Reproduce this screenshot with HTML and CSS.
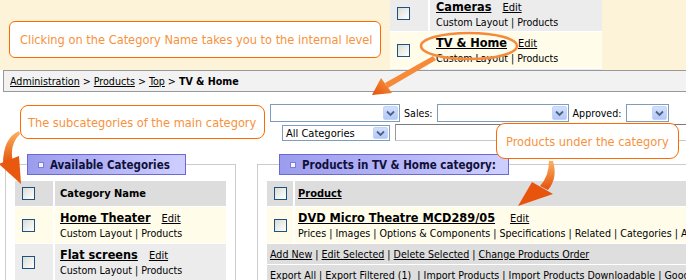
FILE: index.html
```html
<!DOCTYPE html>
<html>
<head>
<meta charset="utf-8">
<link rel="stylesheet" href="styles.css">
</head>
<body>
<div class="top">
  <div class="callout c1">Clicking on the Category Name takes you to the internal level</div>
  <div class="inset">
    <div class="row r-first">
      <div class="cbc gray"><span class="cb"></span></div>
      <div class="cell gray in-cell"><div class="nm"><a class="name">Cameras</a><a class="edit">Edit</a></div><div class="sub"><a>Custom Layout</a> | <a>Products</a></div></div>
    </div>
    <div class="row r-data">
      <div class="cbc cream"><span class="cb"></span></div>
      <div class="cell cream in-cell"><div class="nm"><a class="name">TV &amp; Home</a><a class="edit">Edit</a></div><div class="sub"><a>Custom Layout</a> | <a>Products</a></div></div>
    </div>
    <div class="row r-data">
      <div class="cbc gray"></div>
      <div class="cell gray"></div>
    </div>
  </div>
</div>

<div class="crumb"><a>Administration</a> &gt; <a>Products</a> &gt; <a>Top</a> &gt; <b>TV &amp; Home</b></div>

<div class="fa">
  <div class="callout c2">The subcategories of the main category</div>
  <div class="filters">
    <div class="frow">
      <div class="sel w130"><span class="sv"></span><span class="btn"><svg width="9" height="7" viewBox="0 0 9 7"><path d="M1 1.5 L4.5 5 L8 1.5" fill="none" stroke="#4d6185" stroke-width="1.8"/></svg></span></div>
      <span class="lbl">Sales:</span>
      <div class="sel w132"><span class="sv"></span><span class="btn"><svg width="9" height="7" viewBox="0 0 9 7"><path d="M1 1.5 L4.5 5 L8 1.5" fill="none" stroke="#4d6185" stroke-width="1.8"/></svg></span></div>
      <span class="lbl">Approved:</span>
      <div class="sel w43"><span class="sv"></span><span class="btn"><svg width="9" height="7" viewBox="0 0 9 7"><path d="M1 1.5 L4.5 5 L8 1.5" fill="none" stroke="#4d6185" stroke-width="1.8"/></svg></span></div>
    </div>
    <div class="frow r2">
      <div class="sel w108 short"><span class="sv">All Categories</span><span class="btn"><svg width="9" height="7" viewBox="0 0 9 7"><path d="M1 1.5 L4.5 5 L8 1.5" fill="none" stroke="#4d6185" stroke-width="1.8"/></svg></span></div>
      <div class="inp"></div>
    </div>
  </div>
</div>

<div class="panels">
  <div class="panel pl">
    <div class="badge bl"><span class="bico"></span>Available Categories</div>
    <div class="box">
      <div class="tbl">
        <div class="row r-head">
          <div class="cbc hd"><span class="cb"></span></div>
          <div class="cell hd hcell">Category Name</div>
        </div>
        <div class="row r-data">
          <div class="cbc cream"><span class="cb"></span></div>
          <div class="cell cream"><div class="nm"><a class="name">Home Theater</a><a class="edit">Edit</a></div><div class="sub"><a>Custom Layout</a> | <a>Products</a></div></div>
        </div>
        <div class="row r-data">
          <div class="cbc gray"><span class="cb"></span></div>
          <div class="cell gray"><div class="nm"><a class="name">Flat screens</a><a class="edit">Edit</a></div><div class="sub"><a>Custom Layout</a> | <a>Products</a></div></div>
        </div>
        <div class="row r-data">
          <div class="cbc cream"></div>
          <div class="cell cream"></div>
        </div>
      </div>
    </div>
  </div>
  <div class="panel pr">
    <div class="badge br"><span class="bico"></span>Products in TV &amp; Home category:</div>
    <div class="box">
      <div class="tbl">
        <div class="row r-head">
          <div class="cbc hd narrow"><span class="cb"></span></div>
          <div class="cell hd hcell pcell"><a>Product</a></div>
        </div>
        <div class="row r-data">
          <div class="cbc cream narrow"><span class="cb"></span></div>
          <div class="cell cream pcell"><div class="nm"><a class="name">DVD Micro Theatre MCD289/05</a><a class="edit pedit">Edit</a></div><div class="sub"><a>Prices</a> | <a>Images</a> | <a>Options &amp; Components</a> | <a>Specifications</a> | <a>Related</a> | <a>Categories</a> | <a>Attributes</a></div></div>
        </div>
        <div class="act"><a>Add New</a> | <a>Edit Selected</a> | <a>Delete Selected</a> | <a>Change Products Order</a></div>
        <div class="act"><a>Export All</a> | <a>Export Filtered (1)</a>&nbsp; | <a>Import Products</a> | <a>Import Products Downloadable</a> | <a>Google Base</a></div>
      </div>
    </div>
  </div>
</div>

<div class="callout c3">Products under the category</div>

<svg class="overlay" width="686" height="280" viewBox="0 0 686 280">
  <defs>
    <linearGradient id="og" x1="0" y1="0" x2="0" y2="1">
      <stop offset="0" stop-color="#fbb262"/>
      <stop offset="1" stop-color="#e4500a"/>
    </linearGradient>
    <linearGradient id="og2" x1="1" y1="0" x2="0" y2="1">
      <stop offset="0" stop-color="#f99a45"/>
      <stop offset="1" stop-color="#e4500a"/>
    </linearGradient>
  </defs>
  <ellipse cx="469" cy="46" rx="48" ry="13" fill="none" stroke="#f58a3a" stroke-width="2.5"/>
  <path d="M433 56 L436 60 L388 88 L385 83 Z" fill="#f68a38"/>
  <path d="M372 95 L381 78 L392 93 Z" fill="url(#og2)"/>
  <path d="M19 131 Q3 138 3 164 L13 162 Q9 145 20 134 Z" fill="url(#og)"/>
  <path d="M-1 164 L19 156 L21 184 Z" fill="#e8580e"/>
  <path d="M549 161 L553 161 Q558 178 548 190 L540 186 Q549 176 549 161 Z" fill="url(#og)"/>
  <path d="M532 182 L553 194 L518 206 Z" fill="#e8540c"/>
</svg>
</body>
</html>
```

FILE: styles.css
```css
* { box-sizing: border-box; }
html, body { margin: 0; padding: 0; }
body {
  width: 686px;
  height: 280px;
  overflow: hidden;
  position: relative;
  background: #ffffff;
  font-family: "DejaVu Sans Condensed", "DejaVu Sans", sans-serif;
  font-stretch: condensed;
  font-size: 10.6px;
  color: #000;
}
a { color: #000; text-decoration: underline; }

.top {
  height: 70px;
  background: #fdf3d8;
  display: flex;
  align-items: flex-start;
  overflow: hidden;
}
.callout {
  background: #fff;
  border: 1px solid #ff6a00;
  color: #f7923c;
  font-size: 12.7px;
  display: flex;
  align-items: center;
  white-space: nowrap;
}
.c1 { margin: 21px 0 0 9px; width: 372px; height: 37px; border-radius: 6px; padding-left: 10px; }
.c2 { margin: 1px 0 0 20px; width: 245px; height: 34px; border-radius: 8px; padding-left: 7px; flex: none; }
.c3 { position: absolute; left: 496px; top: 123px; width: 183px; height: 36px; border-radius: 9px; padding-left: 9px; z-index: 4; }

.inset {
  margin: -4px 0 0 9px;
  width: 212px;
  display: flex;
  flex-direction: column;
  gap: 1px;
  background: #fff;
  flex: none;
}

.row { display: flex; gap: 2px; }
.r-first { height: 35px; }
.r-data { height: 36px; }
.r-head { height: 25px; }
.cbc {
  width: 38px;
  flex: none;
  display: flex;
  align-items: center;
  padding-left: 7px;
}
.cbc.narrow { width: 26px; }
.cell { flex: 1; padding: 3px 0 0 5px; white-space: nowrap; overflow: hidden; }
.in-cell { padding-left: 6px; }
.pcell { padding-left: 3px; }
.gray { background: #ececec; }
.cream { background: #fffcea; }
.hd { background: #dddddd; }
.hcell { font-weight: bold; font-size: 11px; display: flex; align-items: center; padding-top: 0; }

.cb {
  width: 13px;
  height: 13px;
  border: 1px solid #1c5180;
  background: linear-gradient(135deg, #dcdcd5 0%, #f4f4f2 70%, #ffffff 100%);
}

.nm { height: 16px; line-height: 16px; }
.name { font-weight: bold; font-size: 12.6px; }
.edit { margin-left: 11px; font-size: 11px; }
.pedit { margin-left: 15px; }
.sub { line-height: 14px; }
.sub a { text-decoration: none; }

.crumb {
  margin-left: 3px;
  height: 22px;
  border: 1px solid #999;
  border-right: none;
  background: #f2f2f2;
  padding-left: 6px;
  line-height: 20px;
  white-space: nowrap;
}

.fa { display: flex; padding-top: 12px; height: 48px; }
.filters { margin-left: 5px; display: flex; flex-direction: column; gap: 2px; }
.frow { display: flex; align-items: center; gap: 4px; height: 18px; white-space: nowrap; }
.frow.r2 { margin-left: 12px; gap: 5px; height: 17px; align-items: flex-end; }
.lbl { font-size: 10.6px; }
.sel {
  height: 18px;
  border: 1px solid #7f9db9;
  background: #fff;
  display: flex;
  align-items: stretch;
  padding: 1px;
}
.sel.short { height: 16px; }
.sv { flex: 1; padding-left: 2px; line-height: 14px; font-size: 11px; }
.btn {
  width: 15px;
  flex: none;
  border-radius: 2px;
  background: linear-gradient(#d3e0fc, #b2c8f6);
  border: 1px solid #c3d3fd;
  display: flex;
  align-items: center;
  justify-content: center;
}
.w130 { width: 130px; }
.w132 { width: 132px; }
.w43 { width: 43px; }
.w108 { width: 108px; }
.inp {
  width: 300px;
  height: 17px;
  border: 1px solid #c8c8c8;
  border-top-color: #7a7a7a;
  border-left-color: #9a9a9a;
  background: #fff;
}

.panels { display: flex; align-items: flex-start; margin-top: 14px; }
.panel { display: flex; flex-direction: column; flex: none; }
.pl { margin-left: 5px; width: 231px; }
.pr { margin-left: 21px; width: 429px; }
.badge {
  position: relative;
  z-index: 1;
  height: 21px;
  margin-left: 22px;
  border: 1px solid #6a6ad2;
  background: linear-gradient(90deg, #9c9cee 0%, #b4b4f6 50%, #cfcffe 100%);
  display: flex;
  align-items: center;
  padding-left: 10px;
  font-weight: bold;
  font-size: 11.5px;
  color: #10103a;
  white-space: nowrap;
}
.bl { width: 159px; }
.br { width: 230px; }
.bico {
  width: 6px;
  height: 6px;
  border: 1px solid #7c7ce0;
  background: #f4f4ff;
  margin-right: 6px;
  flex: none;
}
.box {
  margin-top: -11px;
  border: 1px solid #cccccc;
  border-bottom: none;
  padding: 16px 9px 0 9px;
  height: 116px;
  overflow: hidden;
}
.pr .box { border-right: none; padding-right: 0; }
.tbl { display: flex; flex-direction: column; gap: 1px; background: #fff; }
.act {
  background: #dedede;
  height: 20px;
  line-height: 20px;
  padding-left: 3px;
  white-space: nowrap;
  overflow: hidden;
  flex: none;
}

.overlay { position: absolute; left: 0; top: 0; z-index: 5; pointer-events: none; }
```
